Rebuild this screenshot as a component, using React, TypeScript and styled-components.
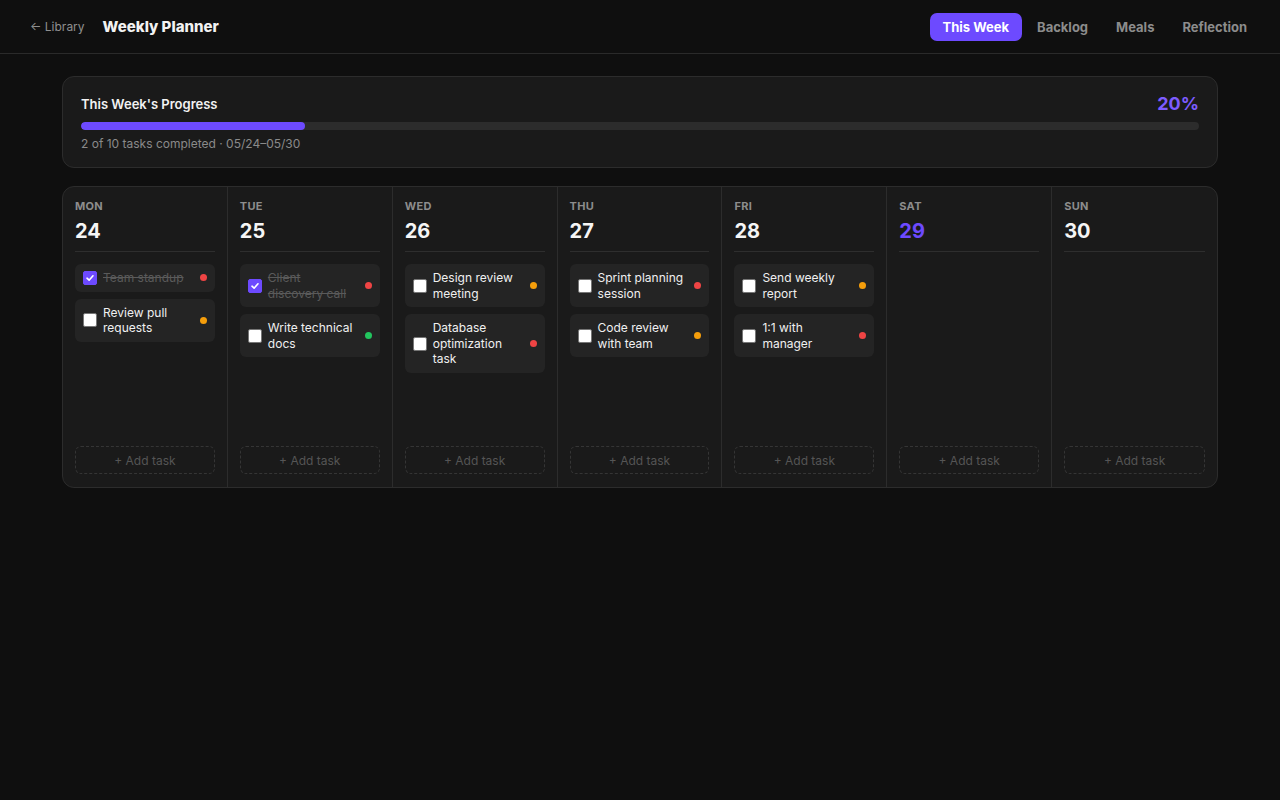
import React from 'react';
import styled, { createGlobalStyle } from 'styled-components';

type Priority = 'high' | 'medium' | 'low';

interface Task {
  title: string;
  done?: boolean;
  priority: Priority;
}

interface Day {
  label: string;
  date: number;
  today?: boolean;
  tasks: Task[];
}

const days: Day[] = [
  {
    label: 'Mon',
    date: 24,
    tasks: [
      { title: 'Team standup', done: true, priority: 'high' },
      { title: 'Review pull requests', priority: 'medium' },
    ],
  },
  {
    label: 'Tue',
    date: 25,
    tasks: [
      { title: 'Client discovery call', done: true, priority: 'high' },
      { title: 'Write technical docs', priority: 'low' },
    ],
  },
  {
    label: 'Wed',
    date: 26,
    tasks: [
      { title: 'Design review meeting', priority: 'medium' },
      { title: 'Database optimization task', priority: 'high' },
    ],
  },
  {
    label: 'Thu',
    date: 27,
    tasks: [
      { title: 'Sprint planning session', priority: 'high' },
      { title: 'Code review with team', priority: 'medium' },
    ],
  },
  {
    label: 'Fri',
    date: 28,
    tasks: [
      { title: 'Send weekly report', priority: 'medium' },
      { title: '1:1 with manager', priority: 'high' },
    ],
  },
  { label: 'Sat', date: 29, today: true, tasks: [] },
  { label: 'Sun', date: 30, tasks: [] },
];

const priorityColors: Record<Priority, string> = {
  high: '#ef4444',
  medium: '#f59e0b',
  low: '#22c55e',
};

const GlobalStyle = createGlobalStyle`
  * { box-sizing: border-box; }
  body {
    margin: 0;
    background: #0f0f0f;
    color: #f5f5f5;
    font-family: Inter, 'Noto Sans', sans-serif;
  }
`;

const App: React.FC = () => {
  const total = days.reduce((n, d) => n + d.tasks.length, 0);
  const done = days.reduce((n, d) => n + d.tasks.filter((t) => t.done).length, 0);
  const pct = Math.round((done / total) * 100);

  return (
    <>
      <GlobalStyle />
      <Header>
        <HeaderLeft>
          <BackLink>← Library</BackLink>
          <PageTitle>Weekly Planner</PageTitle>
        </HeaderLeft>
        <Nav>
          <NavButton $active>This Week</NavButton>
          <NavButton>Backlog</NavButton>
          <NavButton>Meals</NavButton>
          <NavButton>Reflection</NavButton>
        </Nav>
      </Header>
      <Main>
        <ProgressCard>
          <ProgressHead>
            <ProgressTitle>This Week's Progress</ProgressTitle>
            <ProgressPct>{pct}%</ProgressPct>
          </ProgressHead>
          <Track>
            <Fill style={{ width: `${pct}%` }} />
          </Track>
          <ProgressMeta>
            {done} of {total} tasks completed · 05/24–05/30
          </ProgressMeta>
        </ProgressCard>

        <Week>
          {days.map((day) => (
            <Column key={day.label}>
              <DayHead>
                <DayLabel>{day.label}</DayLabel>
                <DayDate $today={day.today}>{day.date}</DayDate>
              </DayHead>
              <TaskList>
                {day.tasks.map((task) => (
                  <TaskCard key={task.title}>
                    <Check $checked={task.done}>
                      {task.done && (
                        <svg width="10" height="10" viewBox="0 0 10 10">
                          <path
                            d="M2 5.2 L4.1 7.2 L8 2.8"
                            fill="none"
                            stroke="#fff"
                            strokeWidth="1.6"
                            strokeLinecap="round"
                            strokeLinejoin="round"
                          />
                        </svg>
                      )}
                    </Check>
                    <TaskTitle $done={task.done}>{task.title}</TaskTitle>
                    <Dot $color={priorityColors[task.priority]} />
                  </TaskCard>
                ))}
              </TaskList>
              <AddTask>+ Add task</AddTask>
            </Column>
          ))}
        </Week>
      </Main>
    </>
  );
};

const Header = styled.header`
  height: 54px;
  display: flex;
  align-items: center;
  justify-content: space-between;
  padding: 0 20px 0 30px;
  border-bottom: 1px solid #2a2a2a;
`;
const HeaderLeft = styled.div`
  display: flex;
  align-items: center;
  gap: 18px;
`;
const BackLink = styled.span`
  font-size: 12px;
  color: #8f8f8f;
`;
const PageTitle = styled.h1`
  margin: 0;
  font-size: 15px;
  font-weight: 800;
  color: #f2f2f2;
`;
const Nav = styled.nav`
  display: flex;
  align-items: center;
  gap: 2px;
`;
const NavButton = styled.button<{ $active?: boolean }>`
  height: 28px;
  padding: 0 13px;
  border: none;
  border-radius: 7px;
  font-family: inherit;
  font-size: 13px;
  font-weight: 700;
  background: ${(p) => (p.$active ? '#6d4aff' : 'transparent')};
  color: ${(p) => (p.$active ? '#ffffff' : '#8c8c8c')};
  cursor: pointer;
`;
const Main = styled.main`
  max-width: 1156px;
  margin: 0 auto;
  padding-top: 22px;
`;
const ProgressCard = styled.section`
  background: #1a1a1a;
  border: 1px solid #2c2c2c;
  border-radius: 12px;
  padding: 16px 18px 15px;
`;
const ProgressHead = styled.div`
  display: flex;
  align-items: center;
  justify-content: space-between;
  height: 22px;
`;
const ProgressTitle = styled.h2`
  margin: 0;
  font-size: 13px;
  font-weight: 600;
  color: #f2f2f2;
`;
const ProgressPct = styled.span`
  margin-top: -2px;
  font-size: 18px;
  font-weight: 700;
  color: #7d5cff;
`;
const Track = styled.div`
  margin-top: 7px;
  height: 8px;
  border-radius: 4px;
  background: #2c2c2c;
  overflow: hidden;
`;
const Fill = styled.div`
  height: 100%;
  border-radius: 4px;
  background: #6d4aff;
`;
const ProgressMeta = styled.p`
  margin: 6px 0 0;
  font-size: 12px;
  line-height: 16px;
  color: #8a8a8a;
`;
const Week = styled.div`
  margin-top: 18px;
  display: grid;
  grid-template-columns: repeat(7, 1fr);
  background: #1a1a1a;
  border: 1px solid #2c2c2c;
  border-radius: 12px;
  overflow: hidden;
`;
const Column = styled.div`
  min-height: 300px;
  padding: 12px 12px 13px;
  display: flex;
  flex-direction: column;
  border-right: 1px solid #2c2c2c;
  &:last-child {
    border-right: none;
  }
`;
const DayHead = styled.div`
  padding-bottom: 8px;
  border-bottom: 1px solid #2e2e2e;
`;
const DayLabel = styled.div`
  font-size: 11px;
  line-height: 14px;
  font-weight: 700;
  letter-spacing: 0.3px;
  text-transform: uppercase;
  color: #8d8d8d;
`;
const DayDate = styled.div<{ $today?: boolean }>`
  margin-top: 6px;
  font-size: 20px;
  line-height: 24px;
  font-weight: 700;
  color: ${(p) => (p.$today ? '#6d4aff' : '#f5f5f5')};
`;
const TaskList = styled.div`
  margin-top: 12px;
  display: flex;
  flex-direction: column;
  gap: 7px;
`;
const TaskCard = styled.div`
  display: flex;
  align-items: center;
  gap: 6px;
  padding: 6px 8px;
  background: #242424;
  border-radius: 6px;
`;
const Check = styled.span<{ $checked?: boolean }>`
  flex: none;
  width: 14px;
  height: 14px;
  border-radius: 2px;
  display: flex;
  align-items: center;
  justify-content: center;
  background: ${(p) => (p.$checked ? '#6d4aff' : '#ffffff')};
  border: 1px solid ${(p) => (p.$checked ? '#6d4aff' : '#767676')};
`;
const TaskTitle = styled.span<{ $done?: boolean }>`
  flex: 1;
  margin-right: 2px;
  font-size: 12px;
  line-height: 1.3;
  color: ${(p) => (p.$done ? '#5a5a5a' : '#f0f0f0')};
  text-decoration: ${(p) => (p.$done ? 'line-through' : 'none')};
`;
const Dot = styled.span<{ $color: string }>`
  flex: none;
  width: 7px;
  height: 7px;
  border-radius: 50%;
  background: ${(p) => p.$color};
`;
const AddTask = styled.button`
  margin-top: auto;
  height: 28px;
  width: 100%;
  border: 1px dashed #353535;
  border-radius: 6px;
  background: transparent;
  font-family: inherit;
  font-size: 12px;
  color: #555555;
  cursor: pointer;
`;

export default App;
